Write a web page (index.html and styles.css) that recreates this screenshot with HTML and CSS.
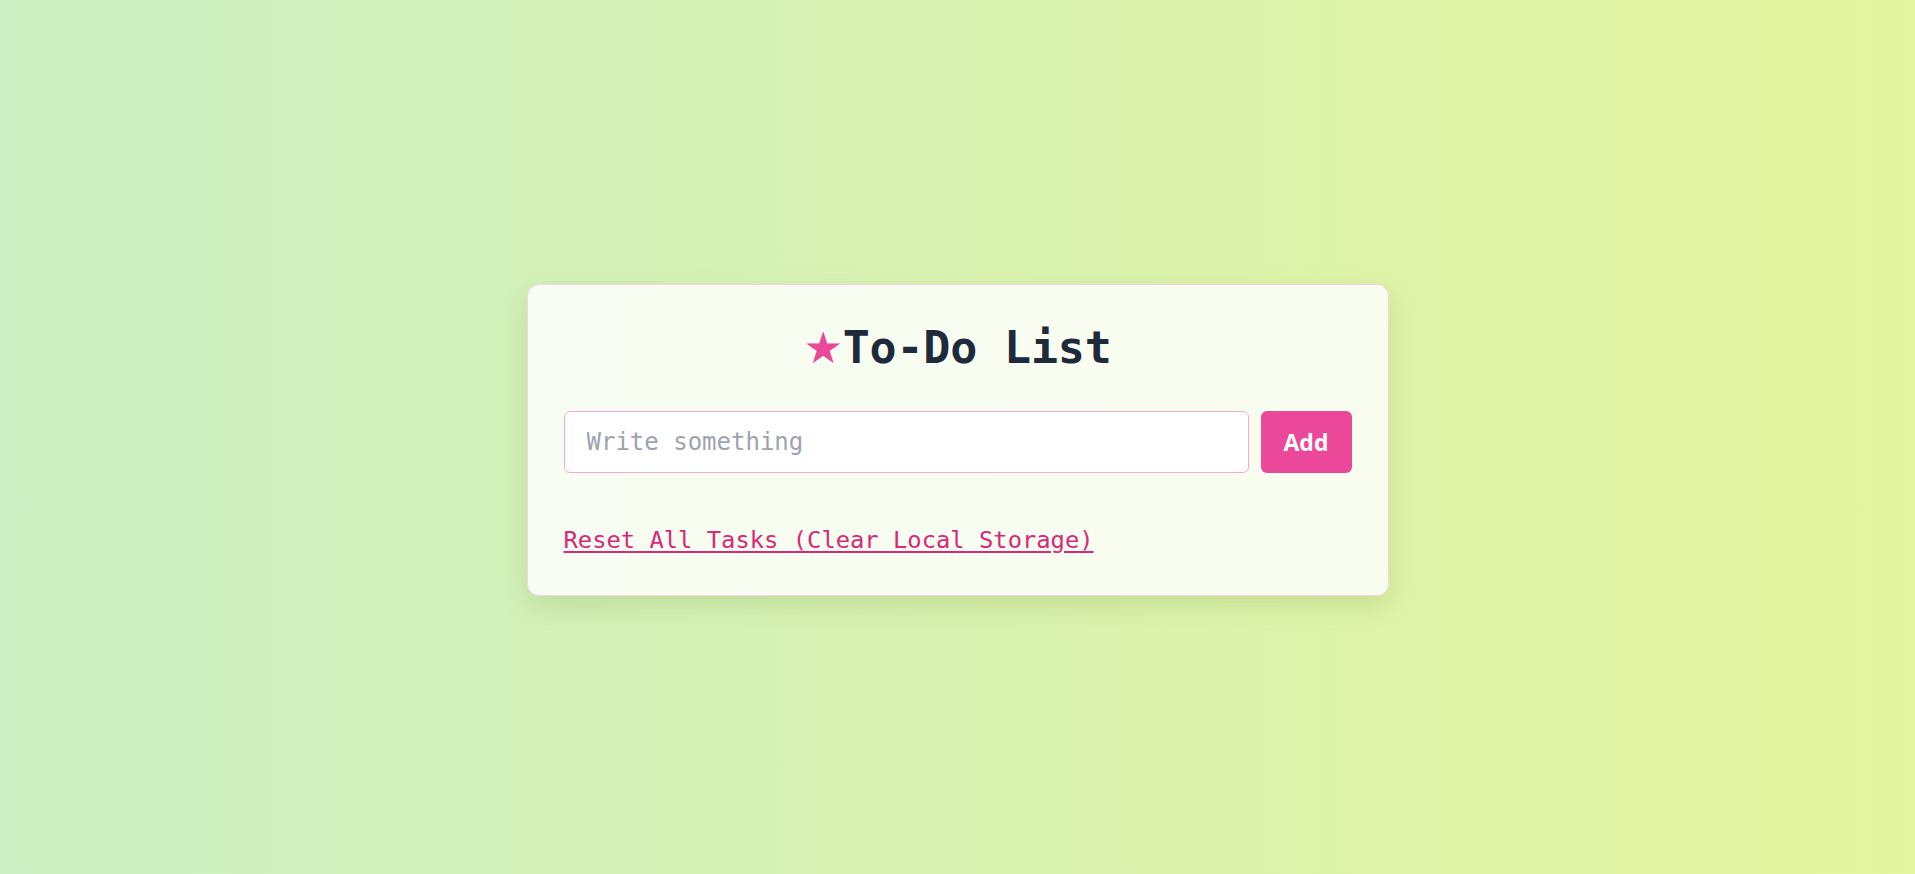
FILE: index.html
```html
<!DOCTYPE html>
<html lang="en">
<head>
<meta charset="utf-8">
<title>To-Do List</title>
<link rel="stylesheet" href="styles.css">
</head>
<body>
<main class="page">
  <section class="card">
    <h1 class="title"><span class="star">★</span>To-Do List</h1>
    <form class="add-row">
      <input class="task-input" type="text" placeholder="Write something">
      <button class="add-btn" type="button">Add</button>
    </form>
    <ul class="task-list"></ul>
    <a class="reset-link" href="#">Reset All Tasks (Clear Local Storage)</a>
  </section>
</main>
</body>
</html>
```

FILE: styles.css
```css
* { box-sizing: border-box; }
html, body { margin: 0; height: 100%; }
body {
  font-family: "DejaVu Sans Mono", "Liberation Mono", monospace;
  background: linear-gradient(to right, #ccefc3, #e6f59f);
}
.page {
  min-height: 100vh;
  padding-top: 6px;
  display: flex;
  align-items: center;
  justify-content: center;
}
.card {
  width: 862px;
  background: rgba(255, 255, 255, 0.82);
  border: 1px solid #f9d0e4;
  border-radius: 12px;
  padding: 36px 36px 41px;
  box-shadow: 0 10px 25px rgba(120, 150, 60, 0.22);
  display: flex;
  flex-direction: column;
}
.title {
  margin: 0 0 36px;
  text-align: center;
  font-size: 45px;
  font-weight: 700;
  line-height: 54px;
  color: #1e293b;
  letter-spacing: -0.2px;
}
.star {
  color: #ec4899;
  font-family: "DejaVu Sans", sans-serif;
  font-size: 44px;
}
.add-row {
  display: flex;
  gap: 12px;
  margin: 0;
}
.task-input {
  flex: 1;
  height: 62px;
  border: 1px solid #f9a8d4;
  border-radius: 6px;
  padding: 0 22px;
  font-family: "DejaVu Sans Mono", "Liberation Mono", monospace;
  font-size: 24px;
  color: #1e293b;
  background: #ffffff;
  outline: none;
}
.task-input::placeholder { color: #9ca3af; }
.add-btn {
  width: 91px;
  height: 62px;
  border: none;
  border-radius: 6px;
  background: #ec4899;
  color: #ffffff;
  font-family: "Open Sans", "Noto Sans", sans-serif;
  font-weight: 700;
  font-size: 23px;
  cursor: pointer;
}
.task-list {
  list-style: none;
  margin: 0;
  padding: 0;
  min-height: 53px;
}
.reset-link {
  align-self: flex-start;
  color: #db2777;
  font-size: 23.8px;
  text-decoration: underline;
  text-underline-offset: 3px;
}
```
